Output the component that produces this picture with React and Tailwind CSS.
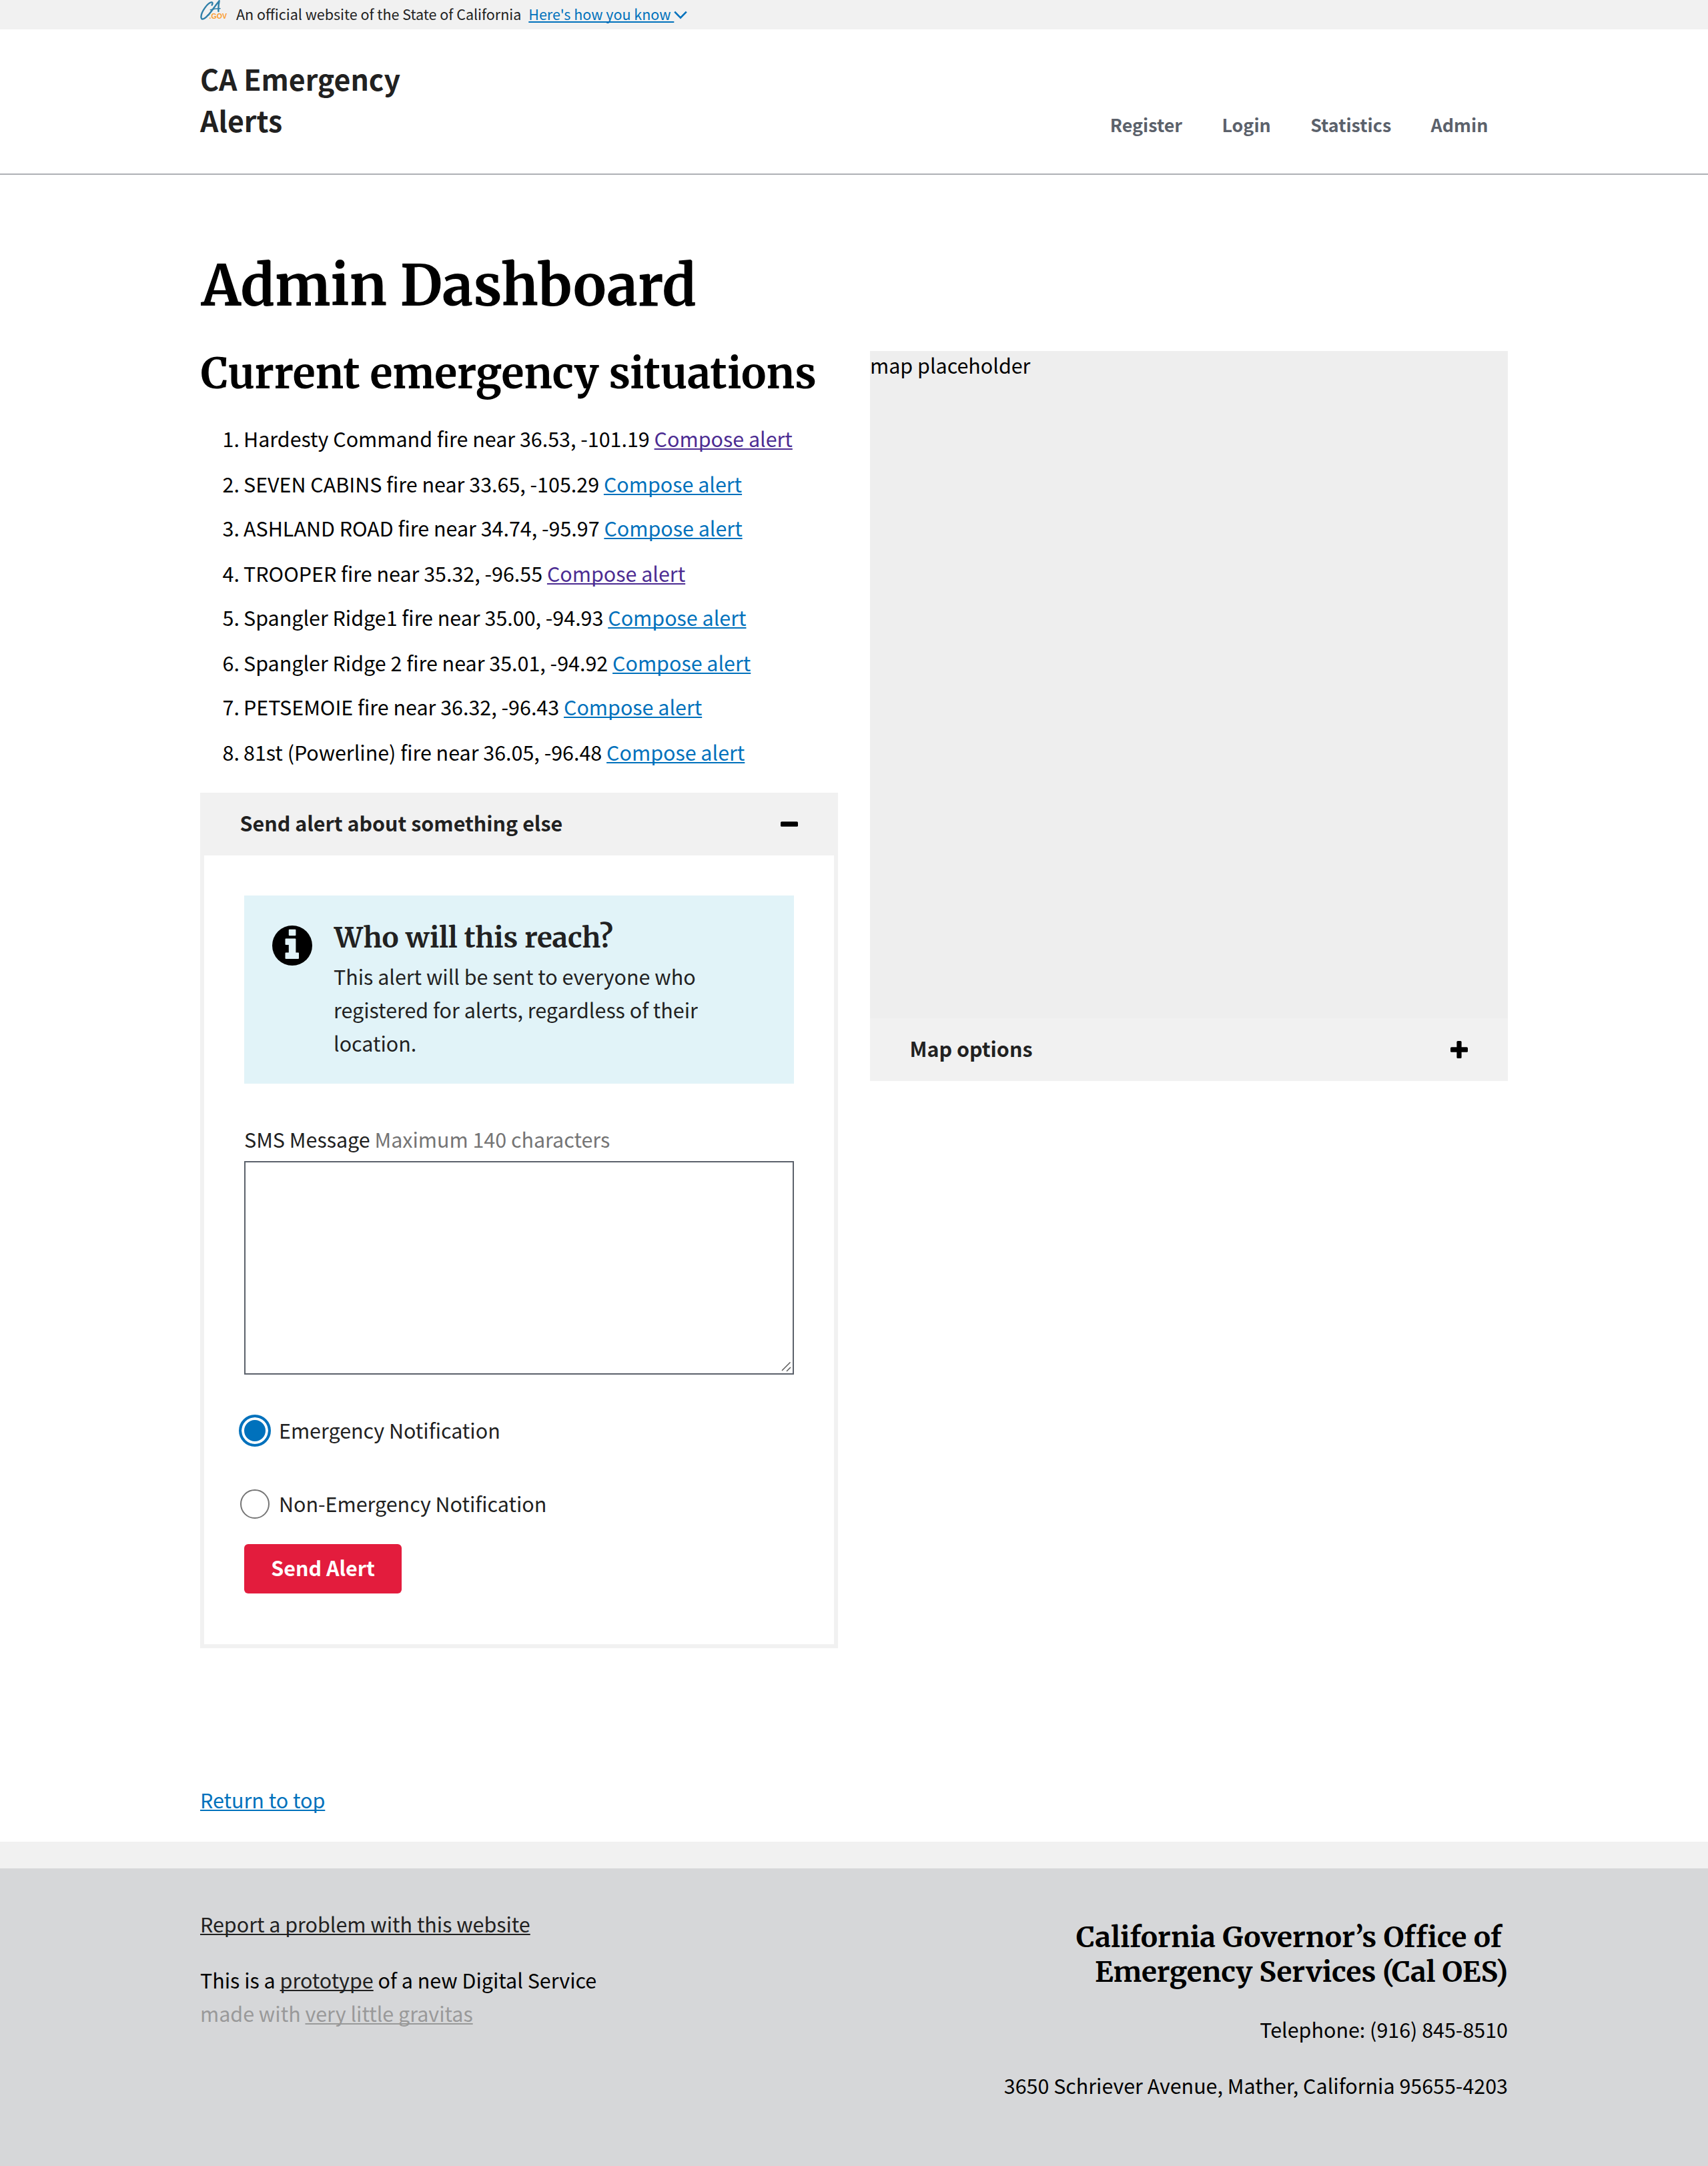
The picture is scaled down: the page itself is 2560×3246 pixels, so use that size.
import React from "react";

const SITUATIONS = [
  { text: "Hardesty Command fire near 36.53, -101.19", visited: true },
  { text: "SEVEN CABINS fire near 33.65, -105.29" },
  { text: "ASHLAND ROAD fire near 34.74, -95.97" },
  { text: "TROOPER fire near 35.32, -96.55", visited: true },
  { text: "Spangler Ridge1 fire near 35.00, -94.93" },
  { text: "Spangler Ridge 2 fire near 35.01, -94.92" },
  { text: "PETSEMOIE fire near 36.32, -96.43" },
  { text: "81st (Powerline) fire near 36.05, -96.48" },
];

const NAV = ["Register", "Login", "Statistics", "Admin"];

const LINK = "underline decoration-2 underline-offset-2 [text-decoration-skip-ink:none]";
const SERIF = "font-['Merriweather','DejaVu_Serif_Condensed',serif] font-bold";

function Logo() {
  return (
    <svg className="h-[32px] w-[42px] shrink-0" viewBox="0 0 42 32" fill="none">
      <g stroke="#2f7fa8" strokeLinecap="round" strokeLinejoin="round">
        <path d="M17.6 7.6C19 5.6 19 3.2 16.8 3.4C11.5 4 1.6 17.5 1.4 25.2C1.4 30.6 6.6 29.2 11.6 22.8" strokeWidth="2.4" />
        <path d="M12.2 22.6C17 17 23 8 28.6 1.2C27.6 6.5 27.2 11.5 27.4 17" strokeWidth="2.4" />
        <path d="M15.4 14.8C20 13.4 24.5 12.9 30 12.8" strokeWidth="1.6" />
      </g>
      <text x="13.6" y="28" fontSize="11" fontWeight="700" textLength="26.4" lengthAdjust="spacingAndGlyphs" fill="#fb9d30" className="font-['Liberation_Sans',sans-serif]">.GOV</text>
    </svg>
  );
}

function InfoIcon() {
  return (
    <svg className="mt-[45px] size-[60px] shrink-0" viewBox="0 0 60 60">
      <circle cx="30" cy="30" r="30" fill="#000" />
      <rect x="24.8" y="5.8" width="10.6" height="9.4" rx="1" fill="#e1f3f8" />
      <path d="M20.5 19.4H34.4Q35.4 19.4 35.4 20.4V40.6H39Q40 40.6 40 41.6V49Q40 50 39 50H20.5Q19.5 50 19.5 49V41.6Q19.5 40.6 20.5 40.6H24.8V29H20.5Q19.5 29 19.5 28V20.4Q19.5 19.4 20.5 19.4Z" fill="#e1f3f8" />
    </svg>
  );
}

function ToggleIcon({ open }) {
  return (
    <svg className="size-[26px]" viewBox="0 0 26 26">
      <rect x="0" y="9.2" width="26" height="7.6" rx="1.6" fill="#000" />
      {!open && <rect x="9.4" y="0" width="7.2" height="26" rx="1.6" fill="#000" />}
    </svg>
  );
}

function AccordionHeader({ title, open }) {
  return (
    <div className="flex h-[94px] items-center justify-between bg-[#f1f1f1] px-[60px]">
      <span className="-ml-[0.5px] pb-1 font-bold leading-[90px] text-[#212121]">{title}</span>
      <ToggleIcon open={open} />
    </div>
  );
}

function Radio({ label, checked }) {
  return (
    <label className="-ml-2 flex gap-[12px] text-[#212121]">
      <span className="mt-[2px] flex size-[48px] shrink-0 items-center justify-center">
        {checked ? (
          <span className="size-[48px] rounded-full border-4 border-[#0071bc] bg-[#0071bc] shadow-[inset_0_0_0_4px_#fff]" />
        ) : (
          <span className="size-[44px] rounded-full border-2 border-[#757575] bg-white" />
        )}
      </span>
      <span>{label}</span>
    </label>
  );
}

export default function App() {
  return (
    <div className="min-h-[3246px] w-full bg-white font-['Noto_Sans_CJK_SC',sans-serif] text-[30.44px] leading-[50px] text-black">
      <div className="h-[44px] bg-[#f1f1f1]">
        <div className="mx-auto flex w-[1960px] text-[21.5px] leading-[41px] text-[#212121]">
          <Logo />
          <span className="ml-[12px]">An official website of the State of California</span>
          <a className={`ml-[11px] whitespace-pre text-[#0071bc] ${LINK}`}>{"Here's how you know "}</a>
          <svg className="mt-[16px] h-[13px] w-[20px]" viewBox="0 0 20 13" fill="none">
            <path d="M1.2 1.6L10 10.6L18.8 1.6" stroke="#0071bc" strokeWidth="2.6" />
          </svg>
        </div>
      </div>

      <header className="h-[218px] border-b-2 border-[#aeb0b5]">
        <div className="mx-auto flex w-[1960px] justify-between pt-[42px]">
          <div className="w-[400px] text-[42.8px] font-bold leading-[62px] text-[#212121]">
            CA Emergency<br />Alerts
          </div>
          <nav className="mr-[29.6px] mt-[85px] flex gap-[59.4px] text-[26.86px] font-bold leading-[31px] text-[#5b616b]">
            {NAV.map((item) => <a key={item}>{item}</a>)}
          </nav>
        </div>
      </header>

      <main className="mx-auto w-[1960px] pt-[117px]">
        <h1 className={`ml-[2px] text-[83.15px] leading-[100px] ${SERIF}`}>Admin Dashboard</h1>
        <div className="mt-[47px] grid grid-cols-2 items-start gap-[48px]">
          <section>
            <h2 className={`ml-px whitespace-nowrap text-[62.7px] leading-[67px] ${SERIF}`}>Current emergency situations</h2>
            <ol className="mt-[39px] pl-[33.6px]">
              {SITUATIONS.map((s, i) => (
                <li key={s.text} className="flex odd:mb-[18px] even:mb-[16px]">
                  <span className="w-[31.4px]">{i + 1}.</span>
                  <span>
                    {s.text}{" "}
                    <a className={`${LINK} ${s.visited ? "text-[#4c2c92]" : "text-[#0071bc]"}`}>Compose alert</a>
                  </span>
                </li>
              ))}
            </ol>

            <div className="mt-[36px]">
              <AccordionHeader title="Send alert about something else" open />
              <div className="h-[1188px] border-x-6 border-b-6 border-[#f1f1f1] p-[60px]">
                <div className="flex h-[282px] gap-[32px] bg-[#e1f3f8] pl-[42px] pr-10 text-[#212121]">
                  <InfoIcon />
                  <div className="pt-[37px]">
                    <h3 className={`ml-px text-[42px] leading-[52px] ${SERIF}`}>Who will this reach?</h3>
                    <p className="mt-[7px]">
                      This alert will be sent to everyone who registered for alerts, regardless of their location.
                    </p>
                  </div>
                </div>
                <div className="mt-[58px] text-[#212121]">
                  SMS Message <span className="text-[#757575]">Maximum 140 characters</span>
                </div>
                <div className="mt-2 flex h-[320px] items-end justify-end border-2 border-[#5b616b]">
                  <svg className="size-[18px]" viewBox="0 0 18 18" fill="none" stroke="#5b5b5b" strokeWidth="1.5">
                    <path d="M2 14L14.5 1.5M9 15L15 9" />
                  </svg>
                </div>
                <div className="mt-[58px]"><Radio label="Emergency Notification" checked /></div>
                <div className="mt-[60px]"><Radio label="Non-Emergency Notification" /></div>
                <button className="mt-[36px] block h-[74px] w-[236px] rounded-[6px] bg-[#e31c3d] pb-1 text-center font-bold leading-[70px] text-white">
                  Send Alert
                </button>
              </div>
            </div>
          </section>

          <section>
            <div className="h-[1000px] bg-[#eee] leading-[42px]">map placeholder</div>
            <AccordionHeader title="Map options" />
          </section>
        </div>
      </main>

      <footer className="mt-[202px]">
        <div className="mx-auto w-[1960px] pb-[38px]">
          <a className={`text-[#0071bc] ${LINK}`}>Return to top</a>
        </div>
        <div className="h-[40px] bg-[#f1f1f1]" />
        <div className="h-[446px] bg-[#d6d7d9]">
          <div className="mx-auto flex w-[1960px] justify-between">
            <div className="pt-[58px]">
              <a className={`text-[#212121] ${LINK}`}>Report a problem with this website</a>
              <p className="mt-[34px]">
                This is a <a className={`text-[#212121] ${LINK}`}>prototype</a> of a new Digital Service
              </p>
              <p className="text-[#999]">
                made with <a className={LINK}>very little gravitas</a>
              </p>
            </div>
            <div className="pt-[77px] text-right">
              <h3 className={`text-[42.4px] leading-[52px] ${SERIF}`}>
                <span className="mr-[9px] tracking-[0.13px]">California Governor’s Office of</span>
                <br />
                <span className="tracking-[-0.06px]">Emergency Services (Cal OES)</span>
              </h3>
              <p className="mt-[35px]">Telephone: (916) 845-8510</p>
              <p className="mt-[34px]">3650 Schriever Avenue, Mather, California 95655-4203</p>
            </div>
          </div>
        </div>
      </footer>
    </div>
  );
}
